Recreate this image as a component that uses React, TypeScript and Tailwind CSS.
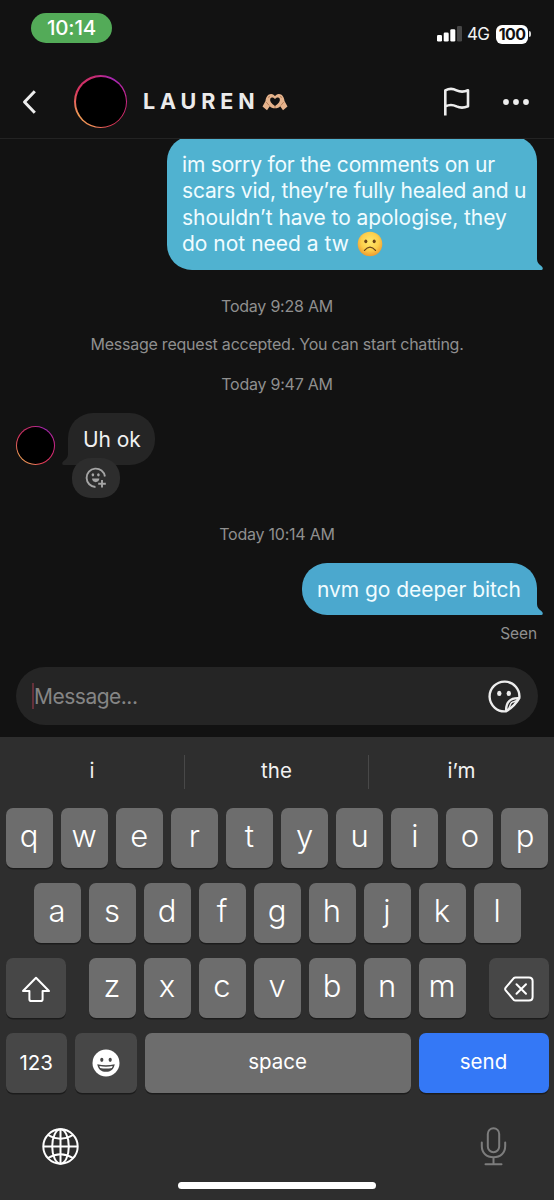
import type { ReactNode } from "react"
import clsx from "clsx"

const rowOne = ["q", "w", "e", "r", "t", "y", "u", "i", "o", "p"]
const rowTwo = ["a", "s", "d", "f", "g", "h", "j", "k", "l"]
const rowThree = ["z", "x", "c", "v", "b", "n", "m"]

const firstMessage = [
  { text: "im sorry for the comments on ur", spacing: "tracking-[-0.2px]" },
  { text: "scars vid, they’re fully healed and u", spacing: "tracking-[-0.2px]" },
  { text: "shouldn’t have to apologise, they", spacing: "tracking-[-0.06px]" },
]

function SadFace() {
  return (
    <svg width="26" height="26" viewBox="0 0 26 26" className="ml-[8px]">
      <defs>
        <radialGradient id="sad" cx="50%" cy="40%" r="60%">
          <stop offset="0%" stopColor="#ffe86e" />
          <stop offset="60%" stopColor="#fdcf4b" />
          <stop offset="100%" stopColor="#ee9a2f" />
        </radialGradient>
      </defs>
      <circle cx="13" cy="13" r="12.3" fill="url(#sad)" />
      <ellipse cx="8.8" cy="10.3" rx="1.5" ry="1.9" fill="#6b4317" />
      <ellipse cx="17.2" cy="10.3" rx="1.5" ry="1.9" fill="#6b4317" />
      <path d="M7.5 19.4 Q13 12.8 18.5 19.4" fill="none" stroke="#6b4317" strokeWidth="1.3" strokeLinecap="round" />
    </svg>
  )
}

function HeartHands() {
  return (
    <svg width="26" height="18" viewBox="0 0 26 18" className="mt-px">
      <path
        d="M0.5 13.5 L3.5 8 C3.8 3.5 6.5 0.6 9.4 0.9 C11 1 12.2 2 13 3.1 C13.8 2 15 1 16.6 0.9 C19.5 0.6 22.2 3.5 22.5 8 L25.5 13.5 L21 17.3 L18.2 13.2 C17 14.6 15.4 15.2 13 15.2 C10.6 15.2 9 14.6 7.8 13.2 L5 17.3 Z"
        fill="#e5b38c"
      />
      <path
        d="M13 13 C9.5 10.8 7.6 8.3 8.2 6 C8.8 4 11.6 3.9 13 6.1 C14.4 3.9 17.2 4 17.8 6 C18.4 8.3 16.5 10.8 13 13Z"
        fill="#121212"
      />
      <path d="M4.2 9 L7.2 12.5 M21.8 9 L18.8 12.5 M6 4.5 L8 3.4 M20 4.5 L18 3.4 M13 13v2" stroke="#a9714d" strokeWidth="0.8" />
    </svg>
  )
}

function Avatar({ small }: { small?: boolean }) {
  return (
    <div
      className={clsx(
        "shrink-0 rounded-full bg-[conic-gradient(from_30deg,#a626b5,#d4277d_20%,#e33a55_35%,#f08a58_46%,#f09a55_58%,#d8345f_74%,#c42c72_88%,#a626b5)]",
        small ? "size-[39px] p-px" : "size-[53px] p-[1.5px]"
      )}
    >
      <div className="size-full rounded-full bg-black" />
    </div>
  )
}

// little hook that sits on the squared-off bottom corner of a bubble
function Tail({ color, left }: { color: string; left?: boolean }) {
  return (
    <svg
      width="7"
      height="11"
      viewBox="0 0 7 11"
      className={clsx("absolute bottom-0", left ? "-left-[6px] -scale-x-100" : "-right-[6px]")}
    >
      <path d="M0 0 H1 C1 3.5 2.8 5 5 6.7 C7.8 8.9 7 11 4.6 11 H0 Z" fill={color} />
    </svg>
  )
}

function Key({ children, className }: { children: ReactNode; className?: string }) {
  return (
    <div
      className={clsx(
        "flex h-[60px] items-center justify-center rounded-[7px] text-white shadow-[0_1.5px_0_#1c1c1c]",
        className
      )}
    >
      {children}
    </div>
  )
}

function Letter({ char }: { char: string }) {
  return (
    <Key className="w-[47px] bg-[#6d6d6d] pb-[3px] text-[31px] font-[350]">
      <span>{char}</span>
    </Key>
  )
}

function StatusBar() {
  return (
    <div className="flex h-[56px] shrink-0 items-start justify-between pt-[13px] pr-[23px] pl-[31px]">
      <div className="flex h-[30px] w-[81px] items-center justify-center rounded-full bg-[#53ab58] pt-px text-[20.5px] font-medium tracking-[-0.2px] text-white">
        10:14
      </div>
      <div className="flex items-center pt-[11px]">
        <svg width="25" height="16" viewBox="0 0 25 16">
          <rect x="0" y="9" width="5" height="6.5" rx="1.3" fill="#fff" />
          <rect x="6.7" y="6.5" width="5" height="9" rx="1.3" fill="#fff" />
          <rect x="13.3" y="3.3" width="5" height="12.2" rx="1.3" fill="#fff" />
          <rect x="20" y="0" width="5" height="15.5" rx="1.3" fill="#474747" />
        </svg>
        <span className="ml-[5px] w-[29px] text-[17px] leading-[20px] tracking-[-0.8px] text-[#f2f2f2]">4G</span>
        <div className="flex h-[19px] w-[32px] items-center justify-center rounded-[6px] bg-white text-[16px] font-bold tracking-[-0.6px] text-[#121212]">
          100
        </div>
        <div className="ml-px h-[6px] w-[2px] rounded-r-full bg-[#d5d5d5]" />
      </div>
    </div>
  )
}

function Header() {
  return (
    <div className="flex h-[83px] shrink-0 items-center border-b border-[#232323] pt-[9px] pr-[24px] pl-[22px]">
      <svg width="15" height="24" viewBox="0 0 15 24" fill="none" stroke="#ededed" strokeWidth="3">
        <path d="M12.8 1.3 L2.5 12 L12.8 22.7" strokeLinejoin="round" />
      </svg>
      <div className="ml-[37px]">
        <Avatar />
      </div>
      <span className="ml-[16px] w-[119px] text-[21.5px] font-bold tracking-[4.9px] text-[#ebebeb]">LAUREN</span>
      <HeartHands />
      <svg width="28" height="30" viewBox="0 0 28 30" fill="none" stroke="#ededed" strokeWidth="2.6" className="ml-auto">
        <path
          d="M2.3 28.5 V3.4 C6 1.5 9.5 1.3 13.5 3.3 C17.5 5.2 21 5 25 3.3 V19.3 C21 21 17.5 21.2 13.5 19.4 C9.5 17.4 6 17.6 2.3 19.4"
          strokeLinejoin="round"
        />
      </svg>
      <svg width="28" height="8" viewBox="0 0 28 8" fill="#ededed" className="ml-[31px]">
        <circle cx="4" cy="4" r="2.9" />
        <circle cx="14" cy="4" r="2.9" />
        <circle cx="24" cy="4" r="2.9" />
      </svg>
    </div>
  )
}

function Notice({ children, className }: { children: ReactNode; className?: string }) {
  return (
    <div
      className={clsx(
        "text-center text-[16px] leading-[20px] tracking-[-0.23px] whitespace-nowrap text-[#8f8f8f]",
        className
      )}
    >
      {children}
    </div>
  )
}

function Messages() {
  return (
    <div className="flex h-[528px] shrink-0 flex-col overflow-hidden">
      <div className="relative mr-[17px] -mt-[3px] h-[133.5px] w-[370px] shrink-0 self-end rounded-[25px] rounded-br-none bg-[#50b2d0] pt-[16px] pl-[15px] text-[21px] leading-[26.4px] whitespace-nowrap text-[#f0fcff]">
        {firstMessage.map((line) => (
          <div key={line.text} className={line.spacing}>
            {line.text}
          </div>
        ))}
        <div className="flex items-center">
          <span>do not need a tw</span>
          <SadFace />
        </div>
        <Tail color="#50b2d0" />
      </div>

      <Notice className="mt-[26.5px]">Today 9:28 AM</Notice>
      <Notice className="mt-[18px]">Message request accepted. You can start chatting.</Notice>
      <Notice className="mt-[20px]">Today 9:47 AM</Notice>

      <div className="mt-[19px] flex shrink-0 items-end pl-[16px]">
        <Avatar small />
        <div className="relative ml-[13px] flex h-[52px] w-[87px] items-center rounded-[25px] rounded-bl-none bg-[#252525] pt-[2px] pl-[15px] text-[21px] tracking-[-0.1px] text-[#f0f0f0]">
          Uh ok
          <Tail color="#252525" left />
        </div>
      </div>
      <div className="relative -mt-[7px] ml-[72px] flex h-[40px] w-[48px] shrink-0 items-center justify-center rounded-[19px] bg-[#2d2d2d]">
        <svg width="22" height="22" viewBox="0 0 22 22" fill="none" stroke="#a5a5a5" strokeWidth="1.9">
          <path d="M19.9 9.5 A9.2 9.2 0 1 0 10.5 20" />
          <path d="M17 13 V20.6 M13.2 16.8 H20.8" />
          <path d="M7 11.6 H14.4 C14.2 16.3 7.2 16.3 7 11.6Z" fill="#a5a5a5" stroke="none" />
          <ellipse cx="7.9" cy="7.8" rx="1.3" ry="1.6" fill="#a5a5a5" stroke="none" />
          <ellipse cx="13.4" cy="7.8" rx="1.3" ry="1.6" fill="#a5a5a5" stroke="none" />
        </svg>
      </div>

      <Notice className="mt-[26px]">Today 10:14 AM</Notice>

      <div className="relative mt-[19px] mr-[17px] flex h-[52px] w-[235px] shrink-0 items-center self-end rounded-[25px] rounded-br-none bg-[#4ba8ce] pt-[2px] pl-[15px] text-[21px] tracking-[-0.05px] whitespace-nowrap text-[#f0fcff]">
        nvm go deeper bitch
        <Tail color="#4ba8ce" />
      </div>
      <div className="mt-[9px] pr-[17px] text-right text-[15.5px] leading-[20px] tracking-[-0.1px] text-[#8f8f8f]">
        Seen
      </div>
    </div>
  )
}

function Composer() {
  return (
    <div className="h-[70px] shrink-0 px-[16px]">
      <div className="flex h-[58px] items-center rounded-full bg-[#252525] pr-[17px] pl-[16px]">
        <div className="h-[26px] w-[2px] bg-[#65313a]" />
        <span className="pt-[2px] text-[21px] tracking-[-0.5px] text-[#858585]">Message...</span>
        <svg width="33" height="33" viewBox="0 0 33 33" fill="none" stroke="#ededed" strokeWidth="2.4" className="ml-auto">
          <path
            d="M18.2 31.3 A14.9 14.9 0 1 1 31.3 18.2 C28.5 23 24 27.8 18.2 31.3 C17.6 22.5 22 17.6 31.3 18.2"
            strokeLinejoin="round"
          />
          <path d="M19.2 30 C22.6 27.4 21.6 24 23.6 22.6 C25.6 21.4 28 22 30.2 19" strokeWidth="1.5" />
          <ellipse cx="11.3" cy="13.4" rx="2.2" ry="2.6" fill="#ededed" stroke="none" />
          <ellipse cx="20.8" cy="13.4" rx="2.2" ry="2.6" fill="#ededed" stroke="none" />
        </svg>
      </div>
    </div>
  )
}

function Keyboard() {
  return (
    <div className="flex h-[463px] shrink-0 flex-col bg-[#2e2e2e]">
      <div className="flex h-[71px] shrink-0 items-center pb-[2px] text-[20.5px] text-[#f2f2f2]">
        <div className="w-[184px] text-center">i</div>
        <div className="h-[34px] w-px bg-[#484848]" />
        <div className="w-[183px] text-center">the</div>
        <div className="h-[34px] w-px bg-[#484848]" />
        <div className="flex-1 text-center">i’m</div>
      </div>

      <div className="flex flex-col gap-[15px] px-[5.5px]">
        <div className="flex justify-between">
          {rowOne.map((char) => (
            <Letter key={char} char={char} />
          ))}
        </div>
        <div className="flex justify-between px-[28px]">
          {rowTwo.map((char) => (
            <Letter key={char} char={char} />
          ))}
        </div>
        <div className="flex justify-between">
          <Key className="w-[60px] bg-[#474747]">
            <svg width="30" height="27" viewBox="0 0 30 27" fill="none" stroke="#fff" strokeWidth="2" strokeLinejoin="round" className="mt-[2px]">
              <path d="M15 1.8 L28 15 H21.6 V23.2 Q21.6 25 19.8 25 H10.2 Q8.4 25 8.4 23.2 V15 H2 Z" />
            </svg>
          </Key>
          <div className="flex w-[377px] justify-between">
            {rowThree.map((char) => (
              <Letter key={char} char={char} />
            ))}
          </div>
          <Key className="w-[60px] bg-[#474747]">
            <svg width="30" height="26" viewBox="0 0 30 26" fill="none" stroke="#fff" strokeWidth="2" strokeLinejoin="round" strokeLinecap="round" className="mt-[2px]">
              <path d="M11.5 1.5 H25 Q28.6 1.5 28.6 5 V21 Q28.6 24.5 25 24.5 H11.5 Q10.4 24.5 9.6 23.7 L1.7 14.4 Q0.6 13 1.7 11.6 L9.6 2.3 Q10.4 1.5 11.5 1.5Z" />
              <path d="M12.5 8.2 L22 17.8 M22 8.2 L12.5 17.8" />
            </svg>
          </Key>
        </div>
        <div className="flex justify-between">
          <Key className="w-[61.5px] bg-[#474747] text-[20.5px]">123</Key>
          <Key className="w-[61.5px] bg-[#474747]">
            <svg width="28" height="28" viewBox="0 0 28 28">
              <circle cx="14" cy="14" r="13.5" fill="#fff" />
              <ellipse cx="9.8" cy="10.8" rx="1.6" ry="2.1" fill="#474747" />
              <ellipse cx="18.2" cy="10.8" rx="1.6" ry="2.1" fill="#474747" />
              <path d="M5.3 15.2 Q14 17.2 22.7 15.2 C22 20.3 18.5 22.8 14 22.8 C9.5 22.8 6 20.3 5.3 15.2Z" fill="#474747" />
              <path d="M7.3 17 Q14 18.6 20.7 17 L19.9 18.9 Q14 20.2 8.1 18.9Z" fill="#fff" />
            </svg>
          </Key>
          <Key className="w-[266px] bg-[#6d6d6d] pb-px text-[20.5px]">space</Key>
          <Key className="w-[130px] bg-[#3478f6] pb-px text-[20.5px]">send</Key>
        </div>
      </div>

      <div className="flex items-center justify-between pt-[34px] pr-[47px] pl-[42px]">
        <svg width="37" height="37" viewBox="0 0 37 37" fill="none" stroke="#fff" strokeWidth="2">
          <circle cx="18.5" cy="18.5" r="17.2" />
          <ellipse cx="18.5" cy="18.5" rx="8.3" ry="17.2" />
          <path d="M18.5 1.3 V35.7 M1.3 18.5 H35.7" />
          <path d="M6 7 Q18.5 14.4 31 7 M6 30 Q18.5 22.6 31 30" />
        </svg>
        <svg width="27" height="39" viewBox="0 0 27 39" fill="none" stroke="#7d7d7d" strokeWidth="2" strokeLinecap="round">
          <rect x="7.8" y="1.2" width="11.4" height="24" rx="5.7" />
          <path d="M1.8 15.5 V19 C1.8 26 6.5 30.3 13.5 30.3 C20.5 30.3 25.2 26 25.2 19 V15.5 M13.5 30.3 V37.3 M5.5 37.3 H21.5" />
        </svg>
      </div>
      <div className="mx-auto mt-auto mb-[11px] h-[7px] w-[198px] rounded-full bg-white" />
    </div>
  )
}

export default function App() {
  return (
    <div className="flex h-[1200px] w-[554px] flex-col overflow-hidden bg-[#121212] font-['Inter','Noto_Sans',sans-serif]">
      <StatusBar />
      <Header />
      <Messages />
      <Composer />
      <Keyboard />
    </div>
  )
}
